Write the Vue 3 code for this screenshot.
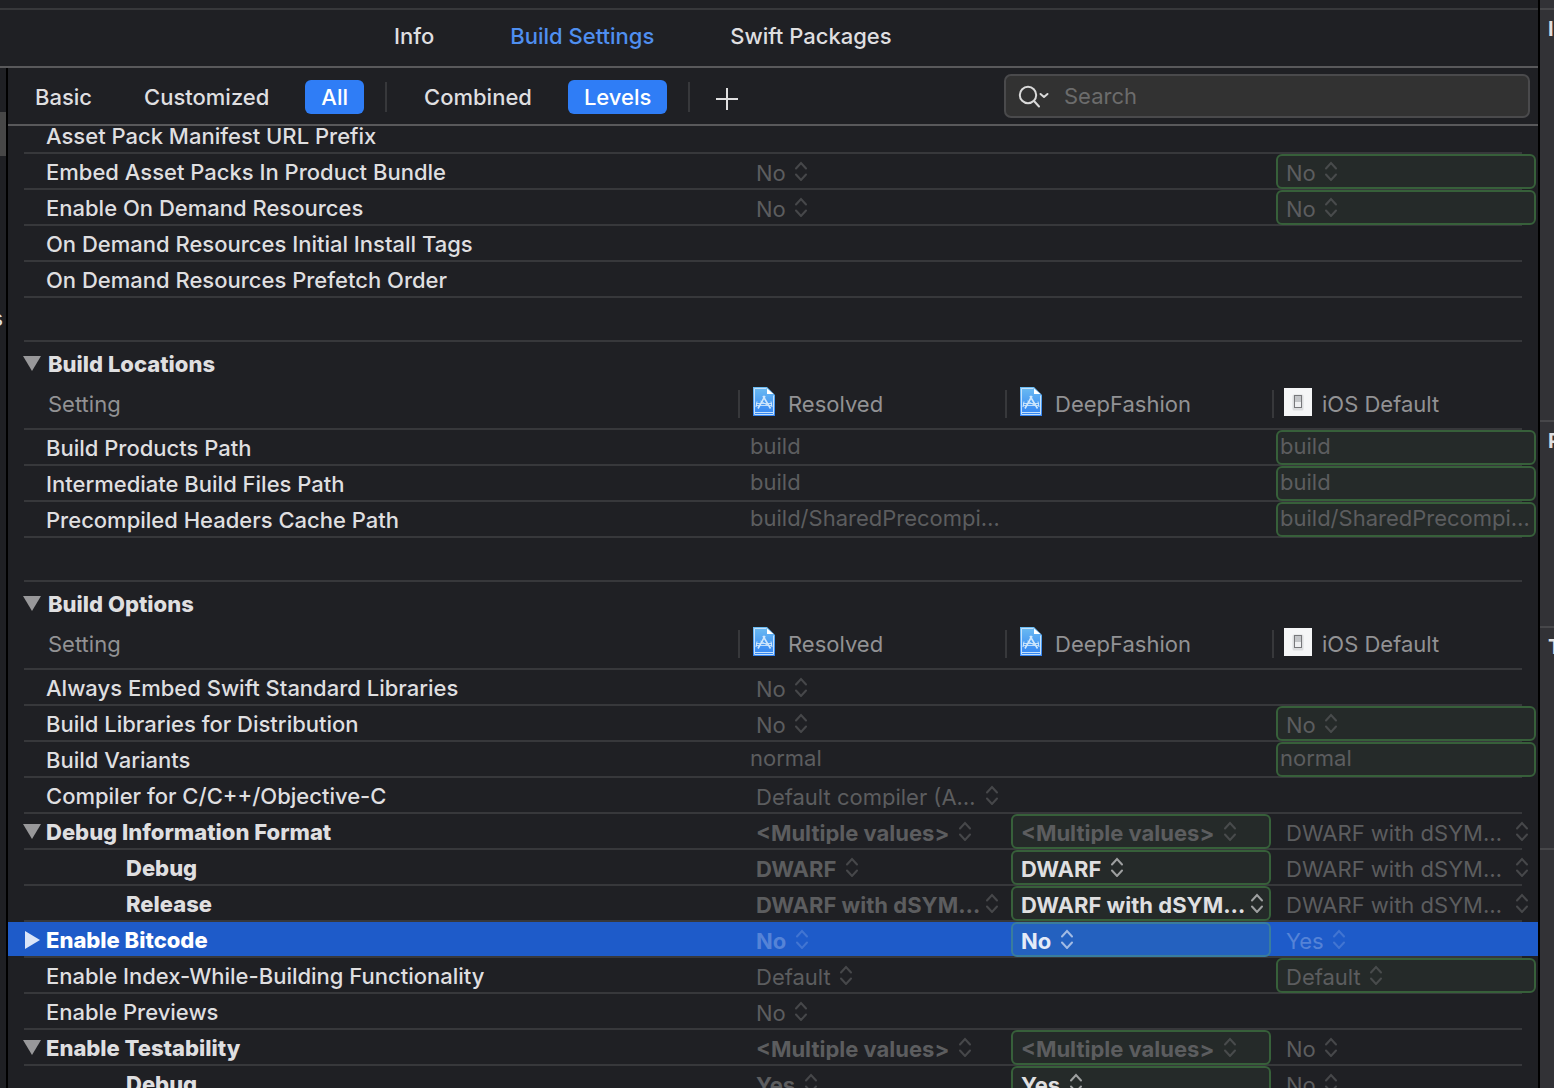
<script setup>
import { ref } from 'vue';

const tabs = ['Info', 'Build Settings', 'Swift Packages'];
const currentTab = ref('Build Settings');
const scope = ref('All');
const layout = ref('Levels');
const search = ref('');
const selected = ref('Enable Bitcode');

const columns = [
    { name: 'Resolved', icon: 'project' },
    { name: 'DeepFashion', icon: 'project' },
    { name: 'iOS Default', icon: 'device' },
];

// cell helpers: popup menu or plain text value
const menu = (value, opts = {}) => ({ type: 'menu', value, ...opts });
const text = (value, opts = {}) => ({ type: 'text', value, ...opts });
const own = { boxed: true };
const set = { boxed: true, bold: true, bright: true };

const sections = ref([
    {
        rows: [
            { name: 'Asset Pack Manifest URL Prefix', cells: [null, null, null] },
            { name: 'Embed Asset Packs In Product Bundle', cells: [menu('No'), null, menu('No', own)] },
            { name: 'Enable On Demand Resources', cells: [menu('No'), null, menu('No', own)] },
            { name: 'On Demand Resources Initial Install Tags', cells: [null, null, null] },
            { name: 'On Demand Resources Prefetch Order', cells: [null, null, null] },
        ],
    },
    {
        title: 'Build Locations',
        rows: [
            { name: 'Build Products Path', cells: [text('build'), null, text('build', own)] },
            { name: 'Intermediate Build Files Path', cells: [text('build'), null, text('build', own)] },
            { name: 'Precompiled Headers Cache Path', cells: [text('build/SharedPrecompi…'), null, text('build/SharedPrecompi…', own)] },
        ],
    },
    {
        title: 'Build Options',
        rows: [
            { name: 'Always Embed Swift Standard Libraries', cells: [menu('No'), null, null] },
            { name: 'Build Libraries for Distribution', cells: [menu('No'), null, menu('No', own)] },
            { name: 'Build Variants', cells: [text('normal'), null, text('normal', own)] },
            { name: 'Compiler for C/C++/Objective-C', cells: [menu('Default compiler (A…', { full: true }), null, null] },
            {
                name: 'Debug Information Format',
                arrow: 'down',
                cells: [
                    menu('<Multiple values>', { bold: true }),
                    menu('<Multiple values>', { bold: true, boxed: true }),
                    menu('DWARF with dSYM…', { full: true }),
                ],
            },
            {
                name: 'Debug',
                child: true,
                cells: [menu('DWARF', { bold: true }), menu('DWARF', set), menu('DWARF with dSYM…', { full: true })],
            },
            {
                name: 'Release',
                child: true,
                cells: [
                    menu('DWARF with dSYM…', { bold: true, full: true }),
                    menu('DWARF with dSYM…', { ...set, full: true }),
                    menu('DWARF with dSYM…', { full: true }),
                ],
            },
            { name: 'Enable Bitcode', arrow: 'right', cells: [menu('No', { bold: true }), menu('No', set), menu('Yes')] },
            { name: 'Enable Index-While-Building Functionality', cells: [menu('Default'), null, menu('Default', own)] },
            { name: 'Enable Previews', cells: [menu('No'), null, null] },
            {
                name: 'Enable Testability',
                arrow: 'down',
                cells: [
                    menu('<Multiple values>', { bold: true }),
                    menu('<Multiple values>', { bold: true, boxed: true }),
                    menu('No'),
                ],
            },
            { name: 'Debug', child: true, cells: [menu('Yes', { bold: true }), menu('Yes', set), menu('No')] },
        ],
    },
]);
</script>

<template>
    <div class="window">
        <main class="main">
            <div class="strip"></div>
            <nav class="tabs">
                <button v-for="tab in tabs" :key="tab" :class="{ current: tab === currentTab }" @click="currentTab = tab">{{ tab }}</button>
            </nav>
            <div class="body">
                <aside class="navigator">
                    <div class="nav-selection"></div>
                    <span>s</span>
                </aside>
                <div class="editor">
                    <div class="toolbar">
                        <button v-for="item in ['Basic', 'Customized', 'All']" :key="item" class="filter" :class="{ active: item === scope }" @click="scope = item">{{ item }}</button>
                        <i class="divider"></i>
                        <button v-for="item in ['Combined', 'Levels']" :key="item" class="filter" :class="{ active: item === layout }" @click="layout = item">{{ item }}</button>
                        <i class="divider"></i>
                        <button class="add" aria-label="+">
                            <svg width="22" height="22" viewBox="0 0 22 22"><path d="M11 0V22M0 11H22" stroke="#dfdfe0" stroke-width="2" /></svg>
                        </button>
                        <label class="search">
                            <svg width="32" height="24" viewBox="0 0 32 24" fill="none" stroke="#dadada" stroke-width="2" stroke-linecap="round">
                                <circle cx="10" cy="11" r="8.2" />
                                <path d="M16 17L21 22.500" />
                                <path d="M22.500 10L26 13L29.500 10" stroke-linejoin="round" />
                            </svg>
                            <input v-model="search" type="text" placeholder="Search" aria-label="Search">
                        </label>
                    </div>

                    <div class="settings">
                        <section v-for="(section, s) in sections" :key="s" class="section">
                            <h2 v-if="section.title" class="title">
                                <button class="disclosure" :aria-label="section.title">
                                    <svg width="18" height="18" viewBox="0 0 18 18"><path d="M0 1H18L9 16Z" fill="#98989a" /></svg>
                                </button>
                                {{ section.title }}
                            </h2>
                            <table>
                                <thead v-if="section.title">
                                    <tr class="head">
                                        <th class="head-name">Setting</th>
                                        <th v-for="column in columns" :key="column.name">
                                            <div class="column">
                                                <svg v-if="column.icon === 'project'" width="28" height="30" viewBox="0 0 28 30">
                                                    <defs>
                                                        <linearGradient id="paper" x1="0" y1="0" x2="0" y2="1">
                                                            <stop offset="0" stop-color="#6cbcf2" />
                                                            <stop offset="1" stop-color="#3182f2" />
                                                        </linearGradient>
                                                    </defs>
                                                    <path d="M3 0H17L25 8V29H3Z" fill="url(#paper)" />
                                                    <path d="M4.500 1.500H16.500M23.500 8.500V27.500H4.500V1.500M4.500 25.500H23.500" fill="none" stroke="#c3e0fb" />
                                                    <path d="M17 1.500V7H23.500Z" fill="#fff" />
                                                    <g fill="none" stroke="#cfe7fc">
                                                        <path d="M15 9L8 21.500M13 9L20.500 21.500" stroke-width="1.600" />
                                                        <path d="M6 16.500H22M6 18.500H22" stroke-width="0.900" />
                                                        <path d="M7 14.500L6 20M21 14.500L22 20M10.500 14L18 18.500" stroke-width="1" />
                                                    </g>
                                                </svg>
                                                <svg v-else width="28" height="30" viewBox="0 0 28 30">
                                                    <rect y="1" width="28" height="28" fill="#f5f6f7" />
                                                    <rect x="8.500" y="7.500" width="11" height="16" rx="1.500" fill="#dcdddf" />
                                                    <rect x="10.500" y="8.500" width="7" height="12" fill="#eeeff1" stroke="#77787b" />
                                                    <rect x="11" y="9" width="6" height="6" fill="#c3c5c8" />
                                                </svg>
                                                {{ column.name }}
                                            </div>
                                        </th>
                                    </tr>
                                </thead>
                                <tbody>
                                    <tr v-for="(row, r) in section.rows" :key="r" class="row" :class="{ selected: row.name === selected }" @click="selected = row.name">
                                        <td class="name" :class="{ child: row.child, strong: row.child || row.arrow }">
                                            <button v-if="row.arrow" class="disclosure" :aria-label="row.name">
                                                <svg v-if="row.arrow === 'down'" width="18" height="18" viewBox="0 0 18 18"><path d="M0 1H18L9 16Z" fill="#98989a" /></svg>
                                                <svg v-else width="18" height="18" viewBox="0 0 18 18"><path d="M2 0L17 9L2 18Z" fill="#dbe5f8" /></svg>
                                            </button>
                                            <span v-else class="disclosure"></span>
                                            {{ row.name }}
                                        </td>
                                        <td v-for="(cell, c) in row.cells" :key="c">
                                            <div v-if="cell" class="value" :class="[cell.type, { boxed: cell.boxed, bold: cell.bold, bright: cell.bright, full: cell.full }]">
                                                <template v-if="cell.type === 'menu'">
                                                    <select :aria-label="row.name">
                                                        <option>{{ cell.value }}</option>
                                                    </select>
                                                    <svg width="14" height="20" viewBox="0 0 14 20" fill="none" stroke="currentColor" stroke-width="2" stroke-linecap="round">
                                                        <path d="M2 7.500L7 2L12 7.500M2 13.500L7 19L12 13.500" />
                                                    </svg>
                                                </template>
                                                <input v-else v-model="cell.value" type="text" :aria-label="row.name">
                                            </div>
                                        </td>
                                    </tr>
                                </tbody>
                            </table>
                        </section>
                    </div>
                </div>
            </div>
        </main>

        <aside class="inspector">
            <div class="strip"></div>
            <section class="identity">I</section>
            <section class="document">P</section>
            <section class="text-settings">T</section>
        </aside>
    </div>
</template>

<style>
body {
    margin: 0;
    background: #1f2024;
}
</style>

<style scoped>
.window {
    display: flex;
    height: 100vh;
    overflow: hidden;
    background: #1f2024;
    color: #dfdfe0;
    font-family: Inter, "Liberation Sans", sans-serif;
    font-size: 22px;
    line-height: 34px;
}

button,
input,
select {
    margin: 0;
    padding: 0;
    border: none;
    outline: none;
    background: none;
    color: inherit;
    font: inherit;
    appearance: none;
}

.main {
    display: flex;
    flex: 1;
    flex-direction: column;
    min-width: 0;
}

.strip {
    flex: none;
    height: 8px;
    border-bottom: 2px solid #37383b;
}

.tabs {
    display: flex;
    flex: none;
    gap: 76px;
    height: 56px;
    padding-left: 394px;
    border-bottom: 2px solid #59595b;
    font-weight: 500;
}

.tabs button {
    height: 52px;
}

.tabs .current {
    color: #4f8ff0;
}

.body {
    display: flex;
    flex: 1;
    min-height: 0;
}

.navigator {
    display: flex;
    flex: none;
    flex-direction: column;
    align-items: flex-end;
    width: 6px;
    padding-top: 44px;
    border-right: 2px solid #000;
    overflow: hidden;
}

.nav-selection {
    width: 100%;
    height: 44px;
    margin-bottom: 145px;
    background: #474747;
}

.navigator span {
    margin-right: 3px;
}

.editor {
    display: flex;
    flex: 1;
    flex-direction: column;
    min-width: 0;
}

.toolbar {
    display: flex;
    flex: none;
    align-items: center;
    gap: 20px;
    height: 56px;
    padding: 0 8px 0 11px;
    border-bottom: 2px solid #59595b;
}

.filter {
    height: 34px;
    margin-top: 2px;
    padding: 0 16px;
    border-radius: 6px;
    font-weight: 500;
}

.filter.active {
    background: #2f7df6;
    color: #fff;
}

.divider {
    width: 2px;
    height: 30px;
    margin: 2px 1px 0;
    background: #37383b;
}

.add {
    display: flex;
    margin: 6px 0 0 5px;
}

.search {
    display: flex;
    align-items: center;
    gap: 14px;
    width: 526px;
    height: 44px;
    margin-left: auto;
    padding: 0 12px;
    border: 2px solid #4a4a4c;
    border-radius: 7px;
    background: #323232;
    box-sizing: border-box;
}

.search input {
    flex: 1;
    min-width: 0;
}

.search input::placeholder {
    color: #6c6c6c;
    opacity: 1;
}

.settings {
    flex: 1;
    min-height: 0;
    overflow: hidden;
}

/* list is scrolled a little, the first row goes under the toolbar */
.section:first-child {
    margin-top: -8px;
}

.section + .section {
    margin-top: 42px;
}

.title {
    display: flex;
    align-items: center;
    gap: 7px;
    height: 44px;
    margin: 0;
    padding: 2px 0 0 15px;
    background: linear-gradient(#37383b, #37383b) 16px 0 / calc(100% - 32px) 2px no-repeat;
    font-size: 22px;
    font-weight: 800;
}

.disclosure {
    display: flex;
    flex: none;
    width: 18px;
    height: 18px;
}

table,
thead,
tbody {
    display: block;
}

th,
td {
    padding: 0;
    font-weight: 400;
    text-align: left;
}

.head {
    display: grid;
    grid-template-columns: minmax(0, 1fr) 267px 267px 266px;
    height: 36px;
    padding-bottom: 8px;
    background: linear-gradient(#37383b, #37383b) 16px 100% / calc(100% - 32px) 2px no-repeat;
    color: #929294;
    line-height: 36px;
}

.head-name {
    padding-left: 40px;
}

.column {
    display: flex;
    align-items: center;
    gap: 10px;
    height: 28px;
    margin-top: 4px;
    padding-left: 10px;
    border-left: 2px solid #37383b;
    line-height: 28px;
}

.column svg {
    margin-top: -4px;
}

.row {
    display: grid;
    grid-template-columns: minmax(0, 1fr) repeat(3, 260px);
    column-gap: 5px;
    height: 36px;
    padding-right: 2px;
    background: linear-gradient(#37383b, #37383b) 16px 100% / calc(100% - 32px) 2px no-repeat;
}

.row.selected {
    background:
        linear-gradient(#1e5bc9, #1e5bc9) 0 0 / 100% 34px no-repeat,
        linear-gradient(#37383b, #37383b) 16px 100% / calc(100% - 32px) 2px no-repeat;
    color: #fff;
}

.name {
    display: flex;
    align-items: center;
    gap: 5px;
    height: 36px;
    padding-left: 15px;
    font-weight: 500;
    white-space: nowrap;
}

.name.child {
    padding-left: 95px;
}

.name.strong {
    font-weight: 800;
}

.value {
    display: flex;
    align-items: center;
    gap: 8px;
    height: 35px;
    padding: 0 7px 1px 8px;
    border: 2px solid transparent;
    border-radius: 6px;
    box-sizing: border-box;
    color: #5c5d5f;
}

.value.text {
    padding: 0 2px;
}

.value.boxed {
    border-color: #37603a;
    background: #252a29;
}

.value.full {
    justify-content: space-between;
    gap: 0;
    padding-right: 5px;
}

.value.bold {
    font-weight: 700;
}

.value svg {
    flex: none;
    opacity: 0.65;
}

.value.bright {
    color: #dfdfe0;
}

.value select {
    height: 30px;
    padding-bottom: 2px;
    box-sizing: border-box;
}

.value input {
    width: 100%;
    height: 30px;
    padding-bottom: 4px;
    box-sizing: border-box;
}

.selected .value {
    color: #5583d7;
}

.selected .value.bright {
    color: #e4ebf8;
}

.selected .value.boxed {
    border-color: #397d9d;
    background: #2461bf;
}

.inspector {
    flex: none;
    width: 14px;
    border-left: 2px solid #000;
    background: #323236;
    overflow: hidden;
    font-size: 20px;
    font-weight: 700;
    line-height: 38px;
}

.inspector .strip,
.inspector section {
    border-bottom: 2px solid #47474a;
}

.inspector section {
    padding-left: 8px;
}

.identity {
    height: 410px;
}

.document {
    height: 204px;
}

.text-settings {
    height: 220px;
}
</style>
